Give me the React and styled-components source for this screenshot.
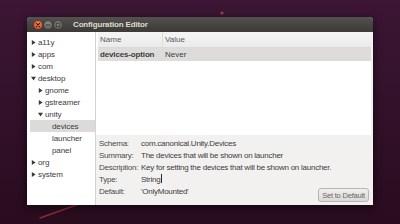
import React from "react";
import styled, { createGlobalStyle } from "styled-components";

const GlobalStyle = createGlobalStyle`
  html, body { margin: 0; padding: 0; }
  body { background: #2c0e22; font-family: "Liberation Sans", Arial, sans-serif; }
`;

const Desktop = styled.div`
  position: relative;
  width: 400px;
  height: 224px;
  overflow: hidden;
  box-sizing: border-box;
  padding: 17px 0 0 27px;
  background: linear-gradient(180deg, #3c1634 0%, #33112b 45%, #290c1e 100%);
`;

const Wallpaper = styled.svg`
  position: absolute;
  left: 0;
  top: 0;
  pointer-events: none;
`;

const Window = styled.div`
  position: relative;
  width: 346px;
  height: 188px;
  display: flex;
  flex-direction: column;
  border-radius: 4px 4px 0 0;
  box-shadow: 0 2px 8px rgba(0, 0, 0, 0.6);
  background: #f2f1f0;
`;

const TitleBar = styled.div`
  height: 15px;
  display: flex;
  align-items: center;
  padding-left: 6px;
  border-radius: 4px 4px 0 0;
  background: linear-gradient(180deg, #53524e 0%, #44433f 60%, #3c3b37 100%);
`;

const Controls = styled.div`
  display: flex;
  align-items: center;
`;

const Title = styled.span`
  margin-left: 10px;
  color: #dfdbd2;
  font-weight: bold;
  font-size: 8px;
  letter-spacing: -0.15px;
`;

const Body = styled.div`
  flex: 1;
  display: flex;
  min-height: 0;
`;

const TreePanel = styled.div`
  width: 69px;
  flex-shrink: 0;
  border-right: 1px solid #d6d4d2;
  background: #ffffff;
  padding: 4px 0 0 3px;
  box-sizing: border-box;
  display: flex;
  flex-direction: column;
`;

const TreeRow = styled.div`
  height: 12px;
  display: flex;
  align-items: center;
  padding-left: ${(p) => 1 + p.$level * 7}px;
  background: ${(p) => (p.$selected ? "#dcdbd9" : "transparent")};
  color: #3c3c3c;
  font-size: 8px;
  letter-spacing: -0.1px;
  white-space: nowrap;
`;

const Expander = styled.span`
  width: 7px;
  height: 12px;
  display: inline-flex;
  align-items: center;
  flex-shrink: 0;
`;

const RightPane = styled.div`
  flex: 1;
  display: flex;
  flex-direction: column;
  min-width: 0;
`;

const ListArea = styled.div`
  height: 103px;
  background: #ffffff;
  margin-right: 2px;
  display: flex;
  flex-direction: column;
`;

const ListHeader = styled.div`
  height: 16px;
  display: grid;
  grid-template-columns: 64px 1fr;
  background: linear-gradient(180deg, #f4f4f4 0%, #ebebeb 100%);
  border-bottom: 1px solid #d9d9d9;
  box-sizing: border-box;
  margin-left: 2px;
`;

const HeaderCell = styled.div`
  display: flex;
  align-items: center;
  padding-left: ${(p) => p.$pad}px;
  color: #5a5a5a;
  font-size: 8px;
  border-left: ${(p) => (p.$sep ? "1px solid #dedede" : "none")};
`;

const ListRow = styled.div`
  height: 13px;
  display: grid;
  grid-template-columns: 64px 1fr;
  background: ${(p) => (p.$selected ? "#dddcda" : "transparent")};
  margin-left: 2px;
`;

const Cell = styled.div`
  display: flex;
  align-items: center;
  padding-left: ${(p) => p.$pad}px;
  color: #3c3c3c;
  font-size: 8px;
  letter-spacing: ${(p) => (p.$bold ? "-0.15px" : "0")};
  font-weight: ${(p) => (p.$bold ? "bold" : "normal")};
  white-space: nowrap;
`;

const Details = styled.div`
  flex: 1;
  display: flex;
  padding: 2px 4px 3px 3px;
  background: #f2f1f0;
  min-width: 0;
`;

const InfoGrid = styled.div`
  flex: 1;
  min-width: 0;
  display: grid;
  grid-template-columns: 42px 1fr;
  grid-auto-rows: 12px;
  align-items: center;
  align-content: start;
  font-size: 8px;
  letter-spacing: -0.25px;
  color: #3c3c3c;
  white-space: nowrap;
`;

const Label = styled.span`
  color: #4a4a4a;
`;

const Value = styled.span``;

const Caret = styled.span`
  display: inline-block;
  width: 1px;
  height: 9px;
  background: #2a2a2a;
  vertical-align: -1px;
  margin-left: 0.5px;
`;

const DefaultButton = styled.button`
  align-self: flex-end;
  flex-shrink: 0;
  width: 51px;
  height: 14px;
  padding: 0;
  border: 1px solid #b7b5b2;
  border-radius: 3px;
  background: linear-gradient(180deg, #f0efee 0%, #dcdad8 100%);
  color: #6a6866;
  font-family: "Liberation Sans", Arial, sans-serif;
  font-size: 7.5px;
  letter-spacing: -0.2px;
  white-space: nowrap;
`;

function WinButton({ kind }) {
  const close = kind === "close";
  return (
    <svg width="10" height="10" viewBox="0 0 10 10">
      <defs>
        <radialGradient id={`g-${kind}`} cx="50%" cy="35%" r="65%">
          <stop offset="0%" stopColor={close ? "#f58a5c" : "#8d8c88"} />
          <stop offset="100%" stopColor={close ? "#d9461c" : "#5b5a56"} />
        </radialGradient>
      </defs>
      <circle cx="5" cy="5" r="4.5" fill={`url(#g-${kind})`} stroke="#2e2d2a" strokeWidth="0.5" />
      {close && (
        <path d="M3.4 3.4 L6.6 6.6 M6.6 3.4 L3.4 6.6" stroke="#3a1a0c" strokeWidth="1.1" strokeLinecap="round" />
      )}
      {kind === "min" && <path d="M3 5 H7" stroke="#3b3a37" strokeWidth="1.1" />}
      {kind === "max" && (
        <rect x="3.2" y="3.2" width="3.6" height="3.6" fill="none" stroke="#3b3a37" strokeWidth="0.9" />
      )}
    </svg>
  );
}

function Arrow({ open }) {
  return (
    <svg width="5" height="5" viewBox="0 0 5 5">
      {open ? (
        <path d="M0 0.8 H5 L2.5 4.6 Z" fill="#3a3a3a" />
      ) : (
        <path d="M0.8 0 V5 L4.6 2.5 Z" fill="#3a3a3a" />
      )}
    </svg>
  );
}

const tree = [
  { label: "a11y", level: 0, exp: "closed" },
  { label: "apps", level: 0, exp: "closed" },
  { label: "com", level: 0, exp: "closed" },
  { label: "desktop", level: 0, exp: "open" },
  { label: "gnome", level: 1, exp: "closed" },
  { label: "gstreamer", level: 1, exp: "closed" },
  { label: "unity", level: 1, exp: "open" },
  { label: "devices", level: 2, selected: true },
  { label: "launcher", level: 2 },
  { label: "panel", level: 2 },
  { label: "org", level: 0, exp: "closed" },
  { label: "system", level: 0, exp: "closed" },
];

const info = [
  ["Schema:", "com.canonical.Unity.Devices"],
  ["Summary:", "The devices that will be shown on launcher"],
  ["Description:", "Key for setting the devices that will be shown on launcher."],
  ["Type:", "String"],
  ["Default:", "'OnlyMounted'"],
];

export default function App() {
  return (
    <>
      <GlobalStyle />
      <Desktop>
        <Wallpaper width="400" height="224" viewBox="0 0 400 224">
          <path d="M40 218 L82 203" stroke="#a5323a" strokeWidth="1.4" strokeLinecap="round" opacity="0.8" />
          <circle cx="222" cy="13" r="1.6" fill="#b0524a" opacity="0.8" />
        </Wallpaper>
        <Window>
          <TitleBar>
            <Controls>
              <WinButton kind="close" />
              <WinButton kind="min" />
              <WinButton kind="max" />
            </Controls>
            <Title>Configuration Editor</Title>
          </TitleBar>
          <Body>
            <TreePanel>
              {tree.map((n) => (
                <TreeRow key={n.label} $level={n.level} $selected={n.selected}>
                  <Expander>{n.exp && <Arrow open={n.exp === "open"} />}</Expander>
                  {n.label}
                </TreeRow>
              ))}
            </TreePanel>
            <RightPane>
              <ListArea>
                <ListHeader>
                  <HeaderCell $pad={2}>Name</HeaderCell>
                  <HeaderCell $pad={2} $sep>Value</HeaderCell>
                </ListHeader>
                <ListRow $selected>
                  <Cell $pad={2} $bold>devices-option</Cell>
                  <Cell $pad={3}>Never</Cell>
                </ListRow>
              </ListArea>
              <Details>
                <InfoGrid>
                  {info.map(([k, v]) => (
                    <React.Fragment key={k}>
                      <Label>{k}</Label>
                      <Value>
                        {v}
                        {k === "Type:" && <Caret />}
                      </Value>
                    </React.Fragment>
                  ))}
                </InfoGrid>
                <DefaultButton>Set to Default</DefaultButton>
              </Details>
            </RightPane>
          </Body>
        </Window>
      </Desktop>
    </>
  );
}
